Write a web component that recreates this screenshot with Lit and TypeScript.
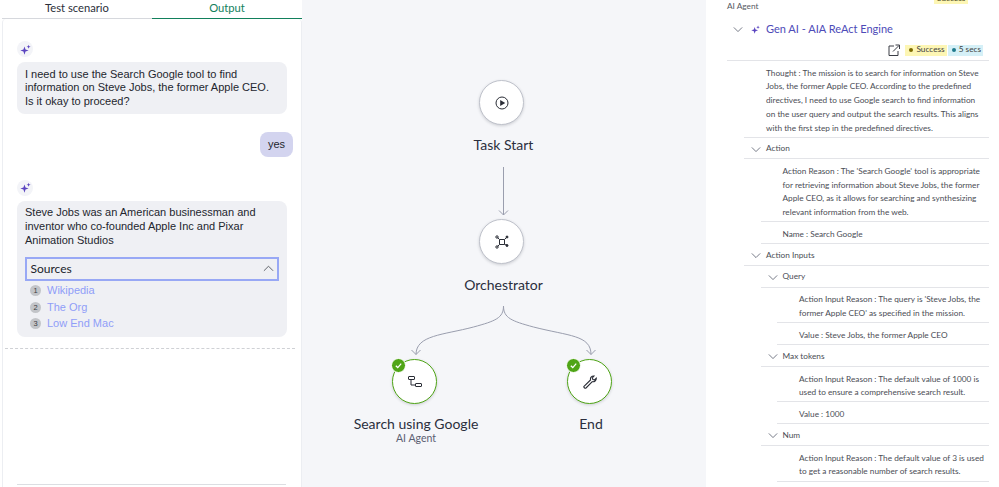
import { LitElement, html, css, svg } from "lit";
import { customElement } from "lit/decorators.js";

const chevron = (up = false) => html`<svg class="chev" viewBox="0 0 12 7" width="11" height="7">
  <path d=${up ? "M1 6l5-5 5 5" : "M1 1l5 5 5-5"} fill="none" stroke="currentColor" stroke-width="1"></path>
</svg>`;

const sparkle = (size = 11) => html`<svg viewBox="0 0 16 16" width=${size} height=${size}>
  <path d="M6.5 3.5 8 8l4.5 1.5L8 11l-1.5 4.5L5 11 .5 9.5 5 8z" fill="#5b45c0"></path>
  <path d="M12.5 1l.8 2.2 2.2.8-2.2.8-.8 2.2-.8-2.2L9.5 4l2.2-.8z" fill="#5b45c0"></path>
</svg>`;

const check = html`<span class="check"><svg viewBox="0 0 10 10" width="9" height="9">
  <path d="M2 5.2 4.2 7.3 8 3" fill="none" stroke="#fff" stroke-width="1.4"></path>
</svg></span>`;

@customElement("app-root")
export class AppRoot extends LitElement {
  static styles = css`
    :host {
      display: flex;
      width: 999px;
      height: 487px;
      overflow: hidden;
      background: #fff;
      font-family: Lato, sans-serif;
    }
    .left {
      width: 303px;
      flex: none;
      box-sizing: border-box;
      border-right: 1px solid #f5f6f9;
      display: flex;
      flex-direction: column;
    }
    .tabs {
      display: flex;
      height: 19px;
      margin-left: 2px;
      width: 300px;
      box-sizing: border-box;
      font-size: 11.2px;
      line-height: 15px;
      color: #2b2f3a;
      text-align: center;
    }
    .tab {
      flex: 1;
      border-bottom: 1px solid #d6d8dd;
    }
    .tab.on {
      color: #12805c;
      border-bottom: 1px solid #12805c;
    }
    .chat {
      flex: 1;
      margin-left: 2px;
      width: 300px;
      box-sizing: border-box;
      border-left: 1px solid #eceef2;
      border-right: 1px solid #eceef2;
      border-radius: 4px 4px 0 0;
      padding: 22px 15px 2px 14px;
      display: flex;
      flex-direction: column;
    }
    .avatar {
      width: 16px;
      height: 16px;
      border-radius: 50%;
      background: #f3f4f8;
      display: flex;
      align-items: center;
      justify-content: center;
    }
    .bubble {
      width: 270px;
      box-sizing: border-box;
      background: #eff0f4;
      border-radius: 8px;
      padding: 5.5px 8px 5px;
      margin-top: 5px;
      font-family: "Liberation Sans", sans-serif;
      font-size: 11px;
      line-height: 13.7px;
      color: #23262e;
      white-space: nowrap;
    }
    .mine {
      align-self: flex-end;
      margin: 18px -7px 0 0;
      background: #d3d4ef;
      border-radius: 8px;
      padding: 6px 8px;
      height: 25px;
      box-sizing: border-box;
      font-family: "Liberation Sans", sans-serif;
      font-size: 11px;
      line-height: 13px;
      color: #23262e;
    }
    .avatar.second {
      margin-top: 23px;
    }
    .sources {
      height: 24px;
      box-sizing: border-box;
      margin-top: 9.4px;
      border: 2px solid #98a8f5;
      display: flex;
      align-items: center;
      justify-content: space-between;
      padding: 0 3.5px;
      font-family: Lato, sans-serif;
      font-size: 12px;
      color: #20232b;
    }
    .sources .chev {
      color: #55585f;
    }
    .links {
      list-style: none;
      margin: 2px 0 0;
      padding: 0 0 0 5px;
    }
    .links li {
      display: flex;
      align-items: center;
      gap: 6px;
      height: 16.5px;
      color: #8f9ef8;
      font-size: 11px;
    }
    .num {
      width: 11px;
      height: 11px;
      border-radius: 50%;
      background: #c2c4c8;
      color: #3a3d44;
      font-size: 7.5px;
      line-height: 11px;
      text-align: center;
      flex: none;
    }
    .dash {
      margin: 11px -9px 0 -12px;
      border-top: 1px dashed #cfd1d5;
    }
    .spacer {
      flex: 1;
    }
    .foot {
      border-top: 1px solid #dcdee2;
    }
    .canvas {
      width: 403px;
      flex: none;
      position: relative;
      background: #f5f6f9;
    }
    .wires {
      position: absolute;
      inset: 0;
    }
    .node {
      position: absolute;
      width: 45px;
      height: 45px;
      box-sizing: border-box;
      border-radius: 50%;
      background: #fff;
      border: 1px solid #bfc2cb;
      box-shadow: 0 1px 3px rgba(40, 45, 60, 0.2);
      display: flex;
      align-items: center;
      justify-content: center;
      color: #2a2d36;
    }
    .node.done {
      border: 1.5px solid #4fa516;
    }
    .check {
      position: absolute;
      left: -2px;
      top: -2px;
      width: 13px;
      height: 13px;
      border-radius: 50%;
      background: #4fa516;
      border: 1.5px solid #fff;
      display: flex;
      align-items: center;
      justify-content: center;
    }
    .name {
      position: absolute;
      transform: translateX(-50%);
      white-space: nowrap;
      text-align: center;
      font-size: 14px;
      line-height: 17px;
      color: #2b2f3d;
    }
    .name small {
      display: block;
      font-size: 10.5px;
      line-height: 11px;
      margin-top: 1px;
      color: #5b6072;
    }
    .right {
      flex: 1;
      min-width: 0;
      box-sizing: border-box;
      padding: 0 10px 0 21px;
      font-size: 8.25px;
      line-height: 13.7px;
      color: #4a4d55;
      white-space: nowrap;
    }
    .crumb {
      height: 13px;
      display: flex;
      justify-content: space-between;
      color: #555963;
      line-height: 12px;
    }
    .clip {
      display: flex;
      gap: 6px;
      margin-top: -8px;
      height: 12px;
      padding-right: 4px;
    }
    .clip b {
      font-weight: 400;
      background: #fdf6b4;
      padding: 0 3px;
      color: #4c4a20;
    }
    .title {
      display: flex;
      align-items: center;
      height: 18px;
      margin-top: 7px;
      padding-left: 6px;
      gap: 8px;
      color: #4d4bb8;
      font-size: 11px;
    }
    .title .chev {
      color: #5c6070;
      width: 10px;
    }
    .title span {
      margin-left: -2px;
    }
    .meta {
      display: flex;
      justify-content: flex-end;
      align-items: center;
      height: 12px;
      margin-top: 6px;
      padding-right: 6px;
    }
    .meta svg {
      margin-right: 5px;
    }
    .pill {
      display: flex;
      align-items: center;
      gap: 2px;
      height: 11px;
      padding: 0 2px 0 3px;
      color: #3e3f40;
    }
    .pill i {
      width: 4px;
      height: 4px;
      border-radius: 50%;
      margin: 0 1px;
    }
    .ok {
      background: #fdf6b4;
      margin-right: 1px;
    }
    .ok i {
      background: #7c6a00;
    }
    .time {
      background: #d5f0f7;
    }
    .time i {
      background: #1f7a8c;
    }
    .rule {
      border-top: 1px solid #e3e4e8;
      margin-top: 4px;
    }
    .row {
      border-bottom: 1px solid #e3e4e8;
      padding: 5.7px 0 1.5px 22px;
    }
    .row p {
      margin: 0;
    }
    .thought {
      margin-left: 17px;
    }
    .group {
      margin-left: 17px;
    }
    .head {
      display: flex;
      align-items: center;
      box-sizing: border-box;
      height: 21.7px;
      padding: 2px 0 0 7px;
      gap: 5px;
      border-bottom: 1px solid #e3e4e8;
    }
    .head .chev {
      color: #5c6070;
      width: 10px;
    }
    .group > .row {
      margin-left: 16.5px;
    }
    .group > .group {
      margin-left: 16.5px;
    }
  `;

  render() {
    return html`
      <section class="left">
        <div class="tabs">
          <div class="tab">Test scenario</div>
          <div class="tab on">Output</div>
        </div>
        <div class="chat">
          <div class="avatar">${sparkle()}</div>
          <div class="bubble">
            I need to use the Search Google tool to find<br />
            information on Steve Jobs, the former Apple CEO.<br />
            Is it okay to proceed?
          </div>
          <div class="mine">yes</div>
          <div class="avatar second">${sparkle()}</div>
          <div class="bubble">
            Steve Jobs was an American businessman and<br />
            inventor who co-founded Apple Inc and Pixar<br />
            Animation Studios
            <div class="sources"><span>Sources</span>${chevron(true)}</div>
            <ul class="links">
              <li><span class="num">1</span>Wikipedia</li>
              <li><span class="num">2</span>The Org</li>
              <li><span class="num">3</span>Low End Mac</li>
            </ul>
          </div>
          <div class="dash"></div>
          <div class="spacer"></div>
          <div class="foot"></div>
        </div>
      </section>

      <section class="canvas">
        <svg class="wires" width="403" height="487" fill="none" stroke="#9a9eae" stroke-width="1">
          ${svg`<path d="M200.5 167V215M196 210.5 200.5 215l4.500-4.500"></path>
          <path d="M200.5 306c0 12-8 15-30 21-30 8-57.5 8-57.5 27.5M108.5 350 113 354.5l4.500-4.500"></path>
          <path d="M200.5 306c0 12 8 15 30 21 35 9 57.5 8 57.5 27.5M283.5 350 288 354.5l4.500-4.500"></path>`}
        </svg>

        <div class="node" style="left:176px;top:80px">
          <svg viewBox="0 0 14 14" width="14" height="14">
            <circle cx="7" cy="7" r="6" fill="none" stroke="currentColor" stroke-width="1"></circle>
            <path d="M5.2 4v6l5-3z" fill="currentColor"></path>
          </svg>
        </div>
        <div class="name" style="left:200.5px;top:136px">Task Start</div>

        <div class="node" style="left:176px;top:219px">
          <svg viewBox="0 0 14 14" width="14" height="14" fill="none" stroke="currentColor" stroke-width="1">
            <path d="M4.5 4.5h5v5h-5zM4.5 4.5 2.5 2.5M9.5 4.5l2-2M4.5 9.5l-2 2M9.5 9.5l2.5.5"></path>
            <circle cx="2" cy="2" r="1.2"></circle>
            <circle cx="12" cy="2" r="1" fill="currentColor"></circle>
            <circle cx="2" cy="12" r="1.2"></circle>
            <circle cx="12" cy="10.5" r="1" fill="currentColor"></circle>
          </svg>
        </div>
        <div class="name" style="left:200.5px;top:276px">Orchestrator</div>

        <div class="node done" style="left:89px;top:359px">
          ${check}
          <svg viewBox="0 0 14 12" width="14" height="12" fill="none" stroke="currentColor" stroke-width="1">
            <rect x="0.5" y="0.5" width="6" height="3" rx="0.5"></rect>
            <rect x="7.5" y="7.5" width="6" height="3" rx="0.5"></rect>
            <path d="M3 3.5V9H7.5"></path>
          </svg>
        </div>
        <div class="name" style="left:113px;top:415px">Search using Google<small>AI Agent</small></div>

        <div class="node done" style="left:264px;top:359px">
          ${check}
          <svg viewBox="0 0 14 14" width="14" height="14" fill="none" stroke="currentColor" stroke-width="1.1">
            <path d="M1 11.3 7.5 5C7 3 8.5 .8 11 1L9.3 3l.6 1.5 1.6.5L13.3 3.2C13.5 5.5 11.3 7.2 9.3 6.7L3 13c-1 .7-2.7-.7-2-1.7z"></path>
          </svg>
        </div>
        <div class="name" style="left:288px;top:415px">End</div>
      </section>

      <section class="right">
        <div class="crumb">
          <span>AI Agent</span>
          <div class="clip"><b>Success</b><span>· · ·</span></div>
        </div>
        <div class="title">${chevron()}${sparkle(9)}<span>Gen AI - AIA ReAct Engine</span></div>
        <div class="meta">
          <svg viewBox="0 0 12 12" width="12" height="12" fill="none" stroke="#3a3d45" stroke-width="1">
            <path d="M6 2H1v9.5h9V7M5 7.5 11 1.5M7.5 1H11.5V5"></path>
          </svg>
          <span class="pill ok"><i></i>Success</span>
          <span class="pill time"><i></i>5 secs</span>
        </div>
        <div class="rule"></div>
        <div class="row thought">
          <p>Thought : The mission is to search for information on Steve<br />
          Jobs, the former Apple CEO. According to the predefined<br />
          directives, I need to use Google search to find information<br />
          on the user query and output the search results. This aligns<br />
          with the first step in the predefined directives.</p>
        </div>
        <div class="group">
          <div class="head">${chevron()}<span>Action</span></div>
          <div class="row"><p>Action Reason : The 'Search Google' tool is appropriate<br />
          for retrieving information about Steve Jobs, the former<br />
          Apple CEO, as it allows for searching and synthesizing<br />
          relevant information from the web.</p></div>
          <div class="row"><p>Name : Search Google</p></div>
          <div class="head">${chevron()}<span>Action Inputs</span></div>
          <div class="group">
            <div class="head">${chevron()}<span>Query</span></div>
            <div class="row"><p>Action Input Reason : The query is 'Steve Jobs, the<br />
            former Apple CEO' as specified in the mission.</p></div>
            <div class="row"><p>Value : Steve Jobs, the former Apple CEO</p></div>
            <div class="head">${chevron()}<span>Max tokens</span></div>
            <div class="row"><p>Action Input Reason : The default value of 1000 is<br />
            used to ensure a comprehensive search result.</p></div>
            <div class="row"><p>Value : 1000</p></div>
            <div class="head">${chevron()}<span>Num</span></div>
            <div class="row"><p>Action Input Reason : The default value of 3 is used<br />
            to get a reasonable number of search results.</p></div>
          </div>
        </div>
      </section>
    `;
  }
}
